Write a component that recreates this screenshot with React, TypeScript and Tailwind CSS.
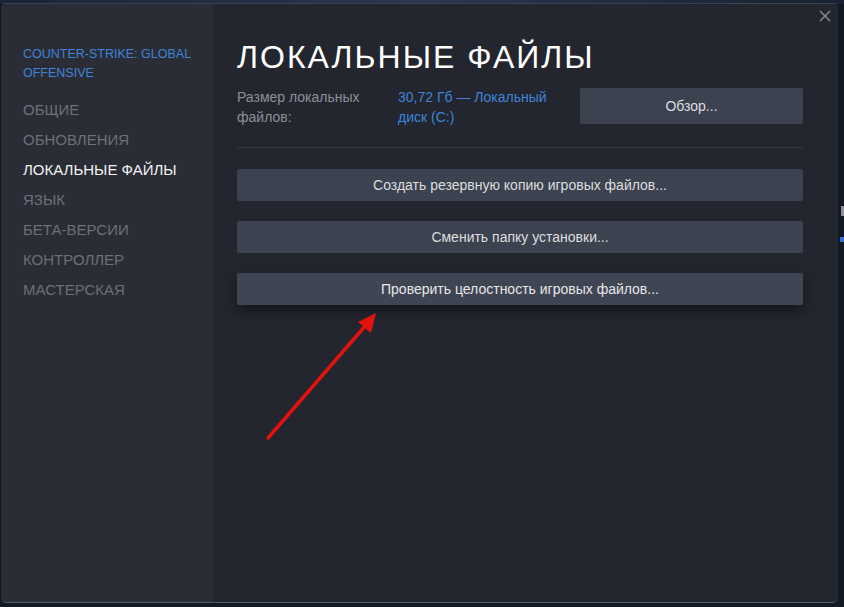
import React from "react";

const nav = [
  { label: "ОБЩИЕ", active: false },
  { label: "ОБНОВЛЕНИЯ", active: false },
  { label: "ЛОКАЛЬНЫЕ ФАЙЛЫ", active: true },
  { label: "ЯЗЫК", active: false },
  { label: "БЕТА-ВЕРСИИ", active: false },
  { label: "КОНТРОЛЛЕР", active: false },
  { label: "МАСТЕРСКАЯ", active: false },
];

export default function App() {
  return (
    <div className="relative w-[844px] h-[607px] overflow-hidden bg-[#121824] pt-[3px] pl-[1px] pr-[6px] pb-[4px] font-['Liberation_Sans',Arial,sans-serif]">
      {/* background scraps visible around the dialog */}
      <div className="absolute left-0 top-0 w-full h-[4px] bg-gradient-to-r from-[#1d2436] via-[#2a3750] to-[#1a2130]" />
      <div className="absolute right-0 top-[206px] w-[3px] h-[10px] bg-[#8a8f98]" />
      <div className="absolute right-0 top-[237px] w-[4px] h-[5px] bg-[#2f6fe0]" />

      <div className="relative flex h-full rounded-[5px] overflow-hidden border-t border-[#3b4150] border-b border-b-[#555a64]">
        <aside className="w-[212px] shrink-0 bg-[#2a2d35] pt-[41px] pl-[22px]">
          <div className="text-[12.5px] leading-[19px] text-[#3f84d9] uppercase">
            Counter-Strike: Global
            <br />
            Offensive
          </div>
          <nav className="mt-[12px] flex flex-col">
            {nav.map((n) =>
              n.active ? (
                <div key={n.label} className="text-[15px] leading-[30px] text-[#f2f2f2]">
                  {n.label}
                </div>
              ) : (
                <div key={n.label} className="text-[15px] leading-[30px] text-[#6c7079]">
                  {n.label}
                </div>
              )
            )}
          </nav>
        </aside>

        <main className="relative flex-1 bg-[#23262e] pl-[24px] pr-[35px] pt-[33px]">
          <button className="absolute right-[7px] top-[6px] w-[12px] h-[12px] text-[#8d9099]">
            <svg viewBox="0 0 12 12" className="w-full h-full" fill="none" stroke="currentColor" strokeWidth="1.4">
              <path d="M1 1 L11 11 M11 1 L1 11" />
            </svg>
          </button>

          <h1 className="text-[32px] leading-[40px] tracking-[2px] text-white font-normal">ЛОКАЛЬНЫЕ ФАЙЛЫ</h1>

          <div className="mt-[10px] h-[40px] flex items-start">
            <div className="w-[161px] text-[14px] leading-[20px] text-[#8b9099]">
              Размер локальных
              <br />
              файлов:
            </div>
            <div className="w-[175px] text-[14px] leading-[20px] text-[#3f84d9]">
              30,72 Гб — Локальный
              <br />
              диск (C:)
            </div>
            <button className="ml-auto mt-[1px] w-[223px] h-[36px] rounded-[2px] bg-[#3d4250] text-[14px] text-[#dcdedf]">
              Обзор...
            </button>
          </div>

          <div className="mt-[20px] h-px bg-[#363a44]" />

          <div className="mt-[21px] flex flex-col gap-[20px]">
            <button className="h-[32px] rounded-[2px] bg-[#3d4250] text-[14px] text-[#dcdedf]">
              Создать резервную копию игровых файлов...
            </button>
            <button className="h-[32px] rounded-[2px] bg-[#3d4250] text-[14px] text-[#dcdedf]">
              Сменить папку установки...
            </button>
            <button className="h-[32px] rounded-[2px] bg-[#404553] text-[14px] text-[#e6e7e8] shadow-[0_6px_14px_rgba(0,0,0,0.45)]">
              Проверить целостность игровых файлов...
            </button>
          </div>
        </main>
      </div>

      {/* red annotation arrow */}
      <svg className="absolute left-0 top-0 pointer-events-none" width="844" height="607" viewBox="0 0 844 607">
        <line x1="268" y1="438" x2="366" y2="325" stroke="#e3120f" strokeWidth="3.5" strokeLinecap="round" />
        <polygon points="376,313 371,333 358,322" fill="#e3120f" />
      </svg>
    </div>
  );
}
